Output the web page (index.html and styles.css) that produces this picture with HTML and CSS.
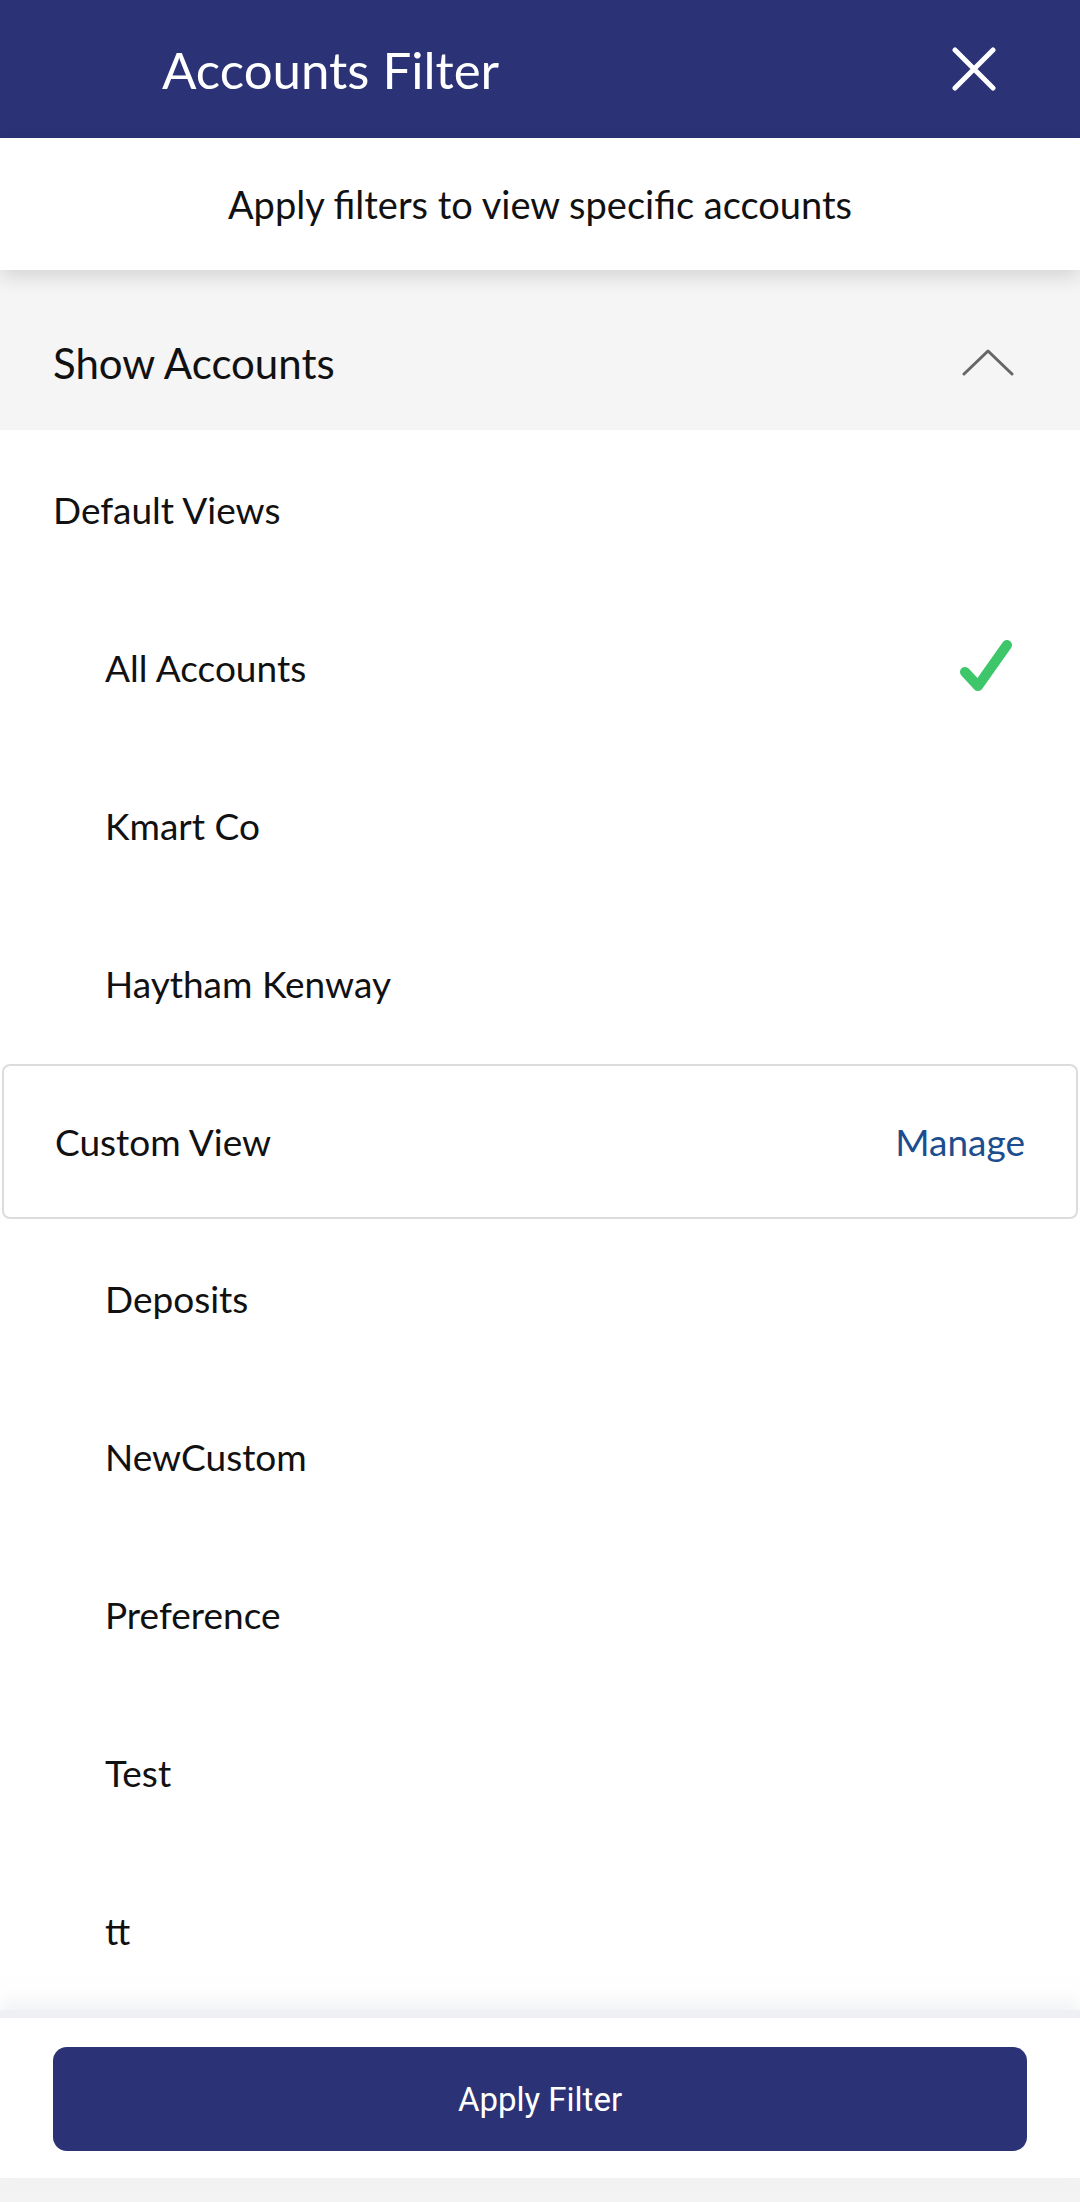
FILE: index.html
```html
<!DOCTYPE html>
<html lang="en">
<head>
    <meta charset="UTF-8">
    <meta name="viewport" content="width=device-width, initial-scale=1.0">
    <title>Accounts Filter</title>
    <link rel="stylesheet" href="styles.css">
</head>
<body>
    <div class="screen">
        <div class="header">
            <h1>Accounts Filter</h1>
            <svg class="close" width="44" height="44" viewBox="0 0 44 44">
                <path d="M3 3 L41 41 M41 3 L3 41" stroke="#fff" stroke-width="5" stroke-linecap="round" fill="none"/>
            </svg>
        </div>

        <div class="subtitle">Apply filters to view specific accounts</div>

        <div class="section-head">
            <span>Show Accounts</span>
            <svg class="chevron" width="52" height="30" viewBox="0 0 52 30">
                <path d="M2 26 L26 3 L50 26" stroke="#666" stroke-width="3" stroke-linejoin="round" stroke-linecap="round" fill="none"/>
            </svg>
        </div>

        <div class="list">
            <div class="group-label">Default Views</div>
            <div class="item selected">
                <span>All Accounts</span>
                <svg class="check" width="56" height="58" viewBox="0 0 56 58">
                    <path d="M7 34 L20 48 L49 7" stroke="#3ec66b" stroke-width="10" stroke-linecap="round" stroke-linejoin="round" fill="none"/>
                </svg>
            </div>
            <div class="item">Kmart Co</div>
            <div class="item">Haytham Kenway</div>

            <div class="group-box">
                <span>Custom View</span>
                <span class="manage">Manage</span>
            </div>
            <div class="item">Deposits</div>
            <div class="item">NewCustom</div>
            <div class="item">Preference</div>
            <div class="item">Test</div>
            <div class="item">tt</div>
        </div>

        <div class="footer">
            <button class="apply">Apply Filter</button>
        </div>
        <div class="navbar"></div>
    </div>
</body>
</html>
```

FILE: styles.css
```css
body {
    margin: 0;
    font-family: Lato, "Open Sans", sans-serif;
    color: #111;
    background: #fff;
}

.screen {
    width: 1080px;
    height: 2202px;
    display: flex;
    flex-direction: column;
    overflow: hidden;
}

.header {
    height: 138px;
    background: #2b3275;
    display: flex;
    align-items: center;
    justify-content: space-between;
    padding: 0 84px 0 162px;
    flex-shrink: 0;
}

.header h1 {
    margin: 0;
    color: #fff;
    font-size: 51px;
    font-weight: 400;
}

.subtitle {
    height: 132px;
    display: flex;
    align-items: center;
    justify-content: center;
    font-size: 38px;
    background: #fff;
    box-shadow: 0 8px 18px rgba(0,0,0,0.12);
    position: relative;
    z-index: 1;
    flex-shrink: 0;
}

.section-head {
    height: 160px;
    background: #f5f5f5;
    display: flex;
    align-items: center;
    justify-content: space-between;
    padding: 26px 66px 0 53px;
    box-sizing: border-box;
    font-size: 42px;
    flex-shrink: 0;
}

.list {
    flex: 1;
    display: flex;
    flex-direction: column;
}

.group-label,
.item {
    height: 158px;
    display: flex;
    align-items: center;
    justify-content: space-between;
    font-size: 37px;
    flex-shrink: 0;
}

.group-label {
    padding: 0 53px;
}

.item {
    padding: 0 66px 0 105px;
}

.group-box {
    height: 151px;
    margin: 2px 2px 0;
    border: 2px solid #dcdcdc;
    border-radius: 8px;
    display: flex;
    align-items: center;
    justify-content: space-between;
    padding: 0 51px;
    font-size: 37px;
    flex-shrink: 0;
}

.manage {
    color: #1c4d8e;
}

.footer {
    height: 168px;
    border-top: 8px solid #eef0f3;
    box-shadow: 0 -10px 16px rgba(230,232,236,0.5);
    display: flex;
    justify-content: center;
    padding-top: 29px;
    box-sizing: border-box;
    background: #fff;
    flex-shrink: 0;
    position: relative;
}

.apply {
    width: 974px;
    height: 104px;
    background: #2b3275;
    color: #fff;
    border: none;
    border-radius: 14px;
    font-family: Roboto, sans-serif;
    font-size: 33px;
}

.navbar {
    height: 24px;
    background: #f3f3f4;
    flex-shrink: 0;
}
```
